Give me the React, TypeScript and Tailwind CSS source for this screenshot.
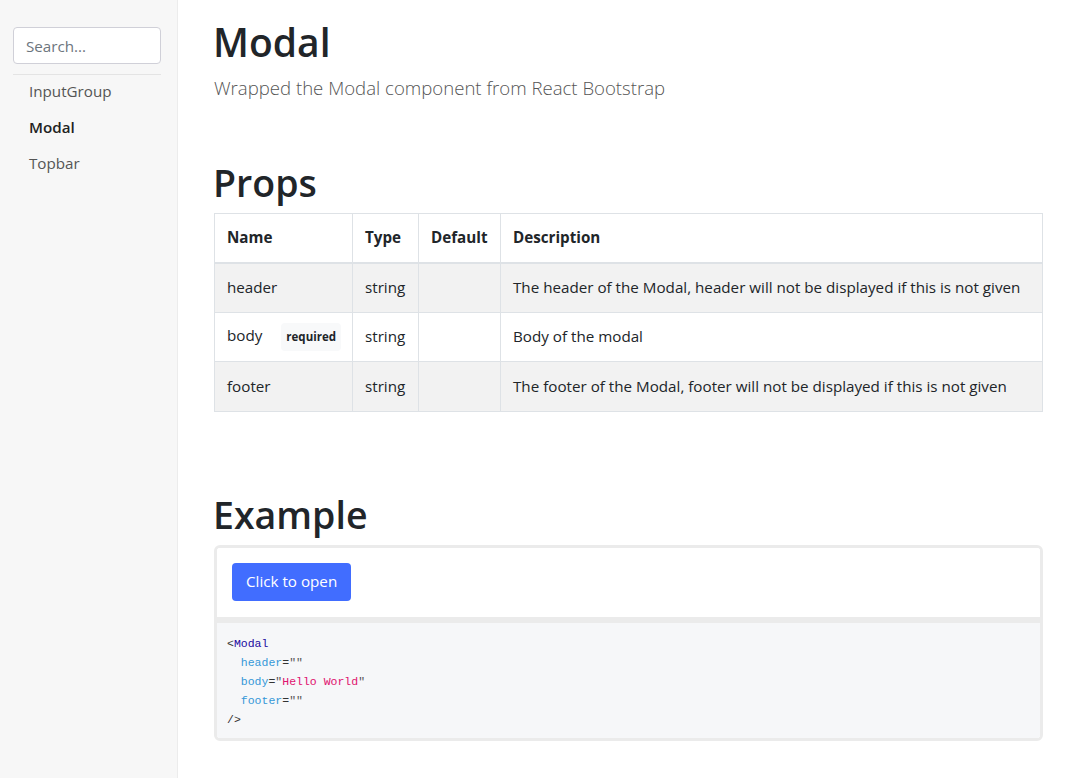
import React from 'react';

interface PropRow {
    name: string;
    required?: boolean;
    type: string;
    defaultValue: string;
    description: string;
}

const propRows: PropRow[] = [
    { name: 'header', type: 'string', defaultValue: '', description: 'The header of the Modal, header will not be displayed if this is not given' },
    { name: 'body', required: true, type: 'string', defaultValue: '', description: 'Body of the modal' },
    { name: 'footer', type: 'string', defaultValue: '', description: 'The footer of the Modal, footer will not be displayed if this is not given' },
];

const navItems = ['InputGroup', 'Modal', 'Topbar'];

const Sidebar: React.FC = () => (
    <aside className="w-[178px] shrink-0 bg-[#f7f7f7] border-r border-[#ececec] min-h-screen pt-[27px] pl-[13px] pr-[16px]">
        <input
            type="text"
            placeholder="Search..."
            className="w-full h-[37px] rounded-[4px] border border-[#d0d0d8] bg-white px-[12px] text-[15.2px] text-[#495057] placeholder:text-[#6c757d] outline-none"
        />
        <div className="mt-[10px] border-t border-[#e4e4e4]" />
        <ul className="-mt-[2px]">
            {navItems.map(item => (
                <li
                    key={item}
                    className={`pl-[16px] h-[36px] flex items-center text-[15.2px] ${item === 'Modal' ? 'font-semibold text-[#222]' : 'text-[#555]'}`}
                >
                    {item}
                </li>
            ))}
        </ul>
    </aside>
);

const CodeBlock: React.FC = () => (
    <pre className="font-['Liberation_Mono',monospace] text-[11.5px] leading-[19px] text-[#333] px-[10px] pt-[11px] pb-[9px]">
        <span className="text-[#333]">&lt;</span><span className="text-[#1a0aa0]">Modal</span>{'\n'}
        {'  '}<span className="text-[#3598d8]">header</span>=<span className="text-[#555]">""</span>{'\n'}
        {'  '}<span className="text-[#3598d8]">body</span>=<span className="text-[#555]">"</span><span className="text-[#e0116e]">Hello World</span><span className="text-[#555]">"</span>{'\n'}
        {'  '}<span className="text-[#3598d8]">footer</span>=<span className="text-[#555]">""</span>{'\n'}
        /&gt;
    </pre>
);

const cell = 'border border-[#dee2e6] pl-[12px] pr-[13px]';

export default function App() {
    return (
        <div className="flex w-full min-h-screen bg-white font-['Open_Sans',sans-serif] text-[#212529]">
            <Sidebar />
            <main className="flex-1 pl-[36px] pr-[30px] pt-[18px]">
                <h1 className="-ml-[1px] text-[39px] leading-[48px] font-semibold">Modal</h1>
                <p className="mt-[8px] text-[18.6px] leading-[28px] font-light text-[#555]">
                    Wrapped the Modal component from React Bootstrap
                </p>

                <h2 className="mt-[58px] -ml-[1px] text-[37.5px] leading-[45px] font-semibold">Props</h2>
                <table className="mt-[8px] w-full table-fixed border-collapse text-[15.2px]">
                    <thead>
                        <tr className="h-[49px]">
                            <th className={`${cell} w-[138px] border-b-2 text-left font-bold`}>Name</th>
                            <th className={`${cell} w-[66px] border-b-2 text-left font-bold`}>Type</th>
                            <th className={`${cell} w-[82px] border-b-2 text-left font-bold`}>Default</th>
                            <th className={`${cell} border-b-2 text-left font-bold`}>Description</th>
                        </tr>
                    </thead>
                    <tbody>
                        {propRows.map((row, i) => (
                            <tr key={row.name} className={`h-[49.5px] ${i % 2 === 0 ? 'bg-[#f2f2f2]' : 'bg-white'}`}>
                                <td className={`${cell} whitespace-nowrap`}>
                                    {row.name}
                                    {row.required && (
                                        <span className="ml-[19px] inline-block rounded-[4px] bg-[#f8f9fa] px-[5px] py-[4px] text-[11.5px] leading-[20px] font-bold align-middle">
                                            required
                                        </span>
                                    )}
                                </td>
                                <td className={cell}>{row.type}</td>
                                <td className={cell}>{row.defaultValue}</td>
                                <td className={`${cell} whitespace-nowrap`}>{row.description}</td>
                            </tr>
                        ))}
                    </tbody>
                </table>

                <h2 className="mt-[80px] -ml-[1px] text-[37.5px] leading-[45px] font-semibold">Example</h2>
                <div className="mt-[8px] mb-[36px] rounded-[6px] border-[3px] border-[#ebebeb] overflow-hidden">
                    <div className="bg-white px-[15px] pt-[15px] pb-[16px]">
                        <button className="h-[38px] px-[14px] rounded-[4px] bg-[#416dff] text-white text-[15.2px]">
                            Click to open
                        </button>
                    </div>
                    <div className="h-[6px] bg-[#ebebeb]" />
                    <div className="bg-[#f6f7f9]">
                        <CodeBlock />
                    </div>
                </div>
            </main>
        </div>
    );
}
